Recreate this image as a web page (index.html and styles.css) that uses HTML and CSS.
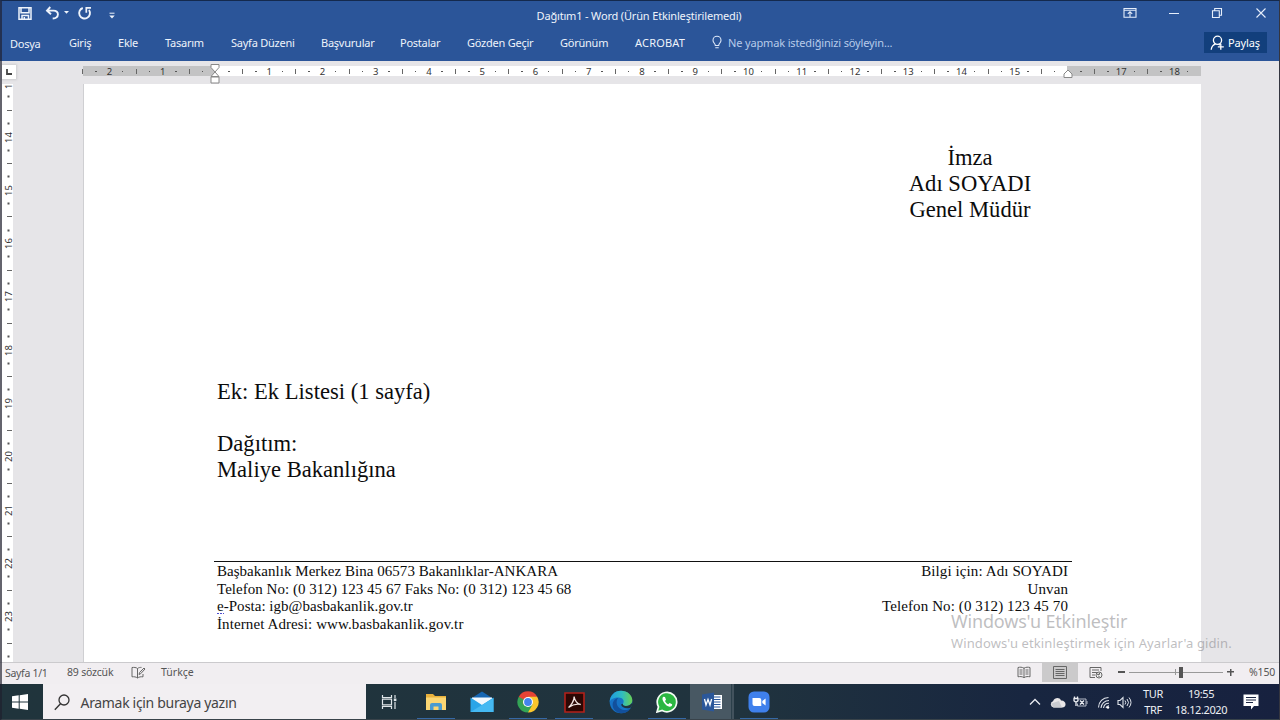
FILE: index.html
```html
<!DOCTYPE html>
<html lang="tr">
<head>
    <meta charset="UTF-8">
    <title>Dağıtım1 - Word</title>
    <link rel="stylesheet" href="styles.css">
</head>
<body>
    <div class="window">
        <!-- Başlık çubuğu -->
        <header class="titlebar">
            <div class="quick">
                <svg width="16" height="16" viewBox="0 0 16 16"><path d="M2 1.700h12v11.600H2zM4 2v4.800h8V2M5 13V9.600h6.500V13M7.300 11v2" fill="none" stroke="#eef3fb" stroke-width="1.500"/></svg>
                <svg class="undo" width="26" height="16" viewBox="0 0 26 16"><path d="M6.300 1 3 4.600l4 3.600M3.300 4.600H9.500c6 0 6 7.600-.8 7.900" fill="none" stroke="#eef3fb" stroke-width="1.900"/><path d="M20 5h5l-2.500 2.800z" fill="#eef3fb"/></svg>
                <svg class="redo" width="16" height="16" viewBox="0 0 16 16"><path d="M5.800 2a5.400 5.400 0 1 0 6.200 2" fill="none" stroke="#eef3fb" stroke-width="1.900"/><path d="M9.300 6.800V1.900h4.700" fill="none" stroke="#eef3fb" stroke-width="1.700"/></svg>
                <svg class="more" width="8" height="8" viewBox="0 0 8 8"><path d="M1.500 1.200h5" stroke="#eef3fb"/><path d="M1.300 3.600h5.400L4 6.500z" fill="#eef3fb"/></svg>
            </div>
            <div class="title">Dağıtım1 - Word (Ürün Etkinleştirilemedi)</div>
            <div class="controls">
                <svg width="14" height="12" viewBox="0 0 14 12"><path d="M1 1.500h12v8.800H1zM1 3.300h12M7 10V5M4.800 6.800 7 4.700l2.200 2.100" fill="none" stroke="#e6eefb" stroke-width="1.100"/></svg>
                <svg width="14" height="12" viewBox="0 0 14 12"><path d="M2 6.500h10" stroke="#e6eefb"/></svg>
                <svg width="14" height="12" viewBox="0 0 14 12"><path d="M2.500 3.700h6.800v6.800H2.500zM4.700 3.500v-2h6.800v6.800h-2" fill="none" stroke="#e6eefb" stroke-width="1.100"/></svg>
                <svg width="14" height="12" viewBox="0 0 14 12"><path d="m2.500 1.500 9 9m0-9-9 9" stroke="#e6eefb" stroke-width="1.100"/></svg>
            </div>
        </header>

        <!-- Şerit sekmeleri -->
        <nav class="tabs">
            <span class="file">Dosya</span>
            <span>Giriş</span>
            <span>Ekle</span>
            <span>Tasarım</span>
            <span>Sayfa Düzeni</span>
            <span>Başvurular</span>
            <span>Postalar</span>
            <span>Gözden Geçir</span>
            <span>Görünüm</span>
            <span class="acrobat">ACROBAT</span>
            <svg width="10" height="15" viewBox="0 0 10 15"><path d="M3.300 10.500c0-2-2.300-2.600-2.300-5.300a4 4 0 0 1 8 0c0 2.700-2.300 3.300-2.300 5.300zM3.300 12.800h3.400" fill="none" stroke="#dce7f8" stroke-width="1.100"/></svg>
            <span class="tell">Ne yapmak istediğinizi söyleyin...</span>
            <button class="share">
                <svg width="15" height="16" viewBox="0 0 15 16"><circle cx="7.500" cy="5.300" r="4.100"/><path d="M1.200 14.800c.3-3 1.800-4.900 4.200-5.600M8.500 9.300l1.500.8M10.800 8.800v6M7.800 11.800h6"/></svg>
                Paylaş
            </button>
        </nav>

        <!-- Yatay cetvel -->
        <div class="ruler-row">
            <div class="tab-stop"><svg width="7" height="6" viewBox="0 0 7 6"><path d="M1 0v5h5" fill="none" stroke="#444" stroke-width="1.800"/></svg></div>
            <div class="hruler" id="hruler"></div>
            <svg class="indent left" width="10" height="20" viewBox="0 0 10 20"><path d="M1 .5h8v3L5 8 1 3.500zM5 8l4 4.500H1zM1 13h8v6H1z" fill="#fff" stroke="#888"/></svg>
            <svg class="indent right" width="10" height="9" viewBox="0 0 10 9"><path d="M5 1l4 4v3.500H1V5z" fill="#fff" stroke="#888"/></svg>
        </div>

        <!-- Belge alanı -->
        <main class="workspace">
            <div class="vruler" id="vruler"></div>
            <article class="page">
                <div class="signature">
                    <p>İmza</p>
                    <p>Adı SOYADI</p>
                    <p>Genel Müdür</p>
                </div>
                <div class="body-text">
                    <p class="ek">Ek: Ek Listesi (1 sayfa)</p>
                    <p>&nbsp;</p>
                    <p>Dağıtım:</p>
                    <p>Maliye Bakanlığına</p>
                </div>
                <footer class="letter-footer">
                    <div>
                        <p>Başbakanlık Merkez Bina 06573 Bakanlıklar-ANKARA</p>
                        <p>Telefon No: (0 312) 123 45 67 Faks No: (0 312) 123 45 68</p>
                        <p><span class="spell">e</span>-Posta: igb@basbakanlik.gov.tr</p>
                        <p class="web">İnternet Adresi: www.basbakanlik.gov.tr</p>
                    </div>
                    <div class="contact">
                        <p>Bilgi için: Adı SOYADI</p>
                        <p>Unvan</p>
                        <p>Telefon No: (0 312) 123 45 70</p>
                    </div>
                </footer>
            </article>
            <div class="watermark">
                <div class="wm-title">Windows'u Etkinleştir</div>
                <div class="wm-sub">Windows'u etkinleştirmek için Ayarlar'a gidin.</div>
            </div>
        </main>

        <!-- Durum çubuğu -->
        <div class="status">
            <span class="st-page">Sayfa 1/1</span>
            <span class="st-words">89 sözcük</span>
            <svg class="proof" width="15" height="13" viewBox="0 0 15 13"><path d="M6.500 2.500C5 1.300 3 1.300 1 1.500v9.300c2-.2 4 0 5.500 1.200zm0 0C8 1.400 9 1.400 10.500 1.400M6.500 12c1.500-1.200 3.500-1.400 5.500-1.200V8M8 8.500l.6-2L13 2l1 1-4.300 4.700z" fill="none" stroke="#666"/></svg>
            <span class="st-lang">Türkçe</span>
            <div class="views">
                <span><svg width="14" height="13" viewBox="0 0 14 13"><path d="M7 2.200C5 1 3 1 1 1.500v9.300c2-.4 4-.4 6 .8 2-1.200 4-1.200 6-.8V1.500c-2-.5-4-.5-6 .7zM7 2v9.500M2.500 4h3M2.500 6h3M2.500 8h3M8.500 4h3M8.500 6h3M8.500 8h3" fill="none" stroke="#666"/></svg></span>
                <span class="on"><svg width="14" height="13" viewBox="0 0 14 13"><path d="M.5.500h13v12H.5zM2.500 3.500h9M2.500 5.500h9M2.500 7.500h9M2.500 9.500h9" fill="none" stroke="#666"/></svg></span>
                <span><svg width="14" height="13" viewBox="0 0 14 13"><path d="M6 11.500H1v-10h11V5M3 4h7M3 6.500h5M3 9h3" fill="none" stroke="#666"/><circle cx="10" cy="9" r="3" fill="#eee" stroke="#666"/><path d="M8 8l2 1 .5-2M9.500 11l1-1" stroke="#555" fill="none"/></svg></span>
            </div>
            <div class="zoom">
                <i class="minus"></i>
                <div class="track"><i class="mid"></i><i class="thumb"></i></div>
                <i class="plus"></i>
            </div>
            <span class="st-zoom">%150</span>
        </div>

        <!-- Görev çubuğu -->
        <div class="taskbar">
            <div class="start"><svg width="16" height="16" viewBox="0 0 16 16"><path d="M0 2.300l6.700-1v6.200H0zM7.700 1.200L16 0v7.500H7.700zM0 8.500h6.700v6.200L0 13.700zM7.700 8.500H16V16l-8.300-1.200z" fill="#fff"/></svg></div>
            <div class="search">
                <svg width="16" height="17" viewBox="0 0 16 17"><circle cx="10" cy="6" r="5" fill="none" stroke="#333" stroke-width="1.300"/><path d="M6.500 9.700.8 15.700" stroke="#333" stroke-width="1.400"/></svg>
                <span>Aramak için buraya yazın</span>
            </div>
            <div class="apps">
                <div class="app"><svg width="17" height="16" viewBox="0 0 17 16"><path d="M1.500 1v2.500h9V1M1.500 15v-2.500h9V15M1.500 5.200h9v5.600h-9zM14 1v3M14 8v7" fill="none" stroke="#dfe5e8" stroke-width="1.200"/><path d="M12.800 4.500h2.600v2.600h-2.600z" fill="#dfe5e8"/></svg></div>
                <div class="app run"><svg width="22" height="20" viewBox="0 0 22 20"><path d="M1 2h7l2 2h11v14H1z" fill="#e9b13c"/><path d="M1 5.500h20V18H1z" fill="#fbd673"/><path d="M5 18v-5q0-2 2-2h8q2 0 2 2v5h-3.500v-3.500h-5V18z" fill="#4a9bd0"/></svg></div>
                <div class="app"><svg width="24" height="22" viewBox="0 0 24 22"><path d="M1 7.500 12 .5l11 7V12H1z" fill="#1666b2"/><path d="M2 6.500h20v8H2z" fill="#f2f8fd"/><path d="M.5 6.500 12 14l11.500-7.500V21H.5z" fill="#2aa5e8"/><path d="M.5 21 23.500 7v14z" fill="#45b9f2"/></svg></div>
                <div class="app run"><svg width="22" height="22" viewBox="0 0 22 22"><path d="M11 11 1.800 5.700A10.600 10.600 0 0 1 20.200 5.700z" fill="#e54335"/><path d="M11 11V5.700h9.200A10.600 10.600 0 0 1 11 21.600z" fill="#fbc62d"/><path d="M1.800 5.700A10.600 10.600 0 0 0 11 21.600l4.600-8z" fill="#33a456"/><path d="M1.800 5.700 11 5.700v5L6.400 13.600z" fill="#e54335"/><path d="M1.800 5.700 6.400 13.600 11 11z" fill="#33a456"/><circle cx="11" cy="11" r="5" fill="#fff"/><circle cx="11" cy="11" r="3.900" fill="#4484ee"/></svg></div>
                <div class="app run"><svg width="21" height="21" viewBox="0 0 21 21"><path d="M1 1h19v19H1z" fill="#2c0805" stroke="#b3211a" stroke-width="1.600"/><path d="M4.500 15.500c2-1.200 6.200-7.500 5.600-11 .3 3.500 3.500 8 6.600 8-3.500-1-8.500.3-12.200 3z" fill="none" stroke="#f5e7e4" stroke-width="1.300"/></svg></div>
                <div class="app"><svg width="24" height="24" viewBox="0 0 24 24">
                    <defs><linearGradient id="sea" x1="0" y1="0" x2="1" y2="0"><stop offset="0" stop-color="#1e9be0"/><stop offset=".55" stop-color="#30bcc0"/><stop offset="1" stop-color="#69d053"/></linearGradient></defs>
                    <circle cx="12" cy="12" r="11.300" fill="#1673c6"/>
                    <path d="M.7 12C.9 5.500 5.800.7 12 .7S23.300 5 23.300 10c0 4-3 6-6.500 6-2.200 0-3.500-1-2.800-2.200 2-3.300-.6-6.300-4.500-6.300C5 7.500 1.500 9 .7 12z" fill="url(#sea)"/>
                    <path d="M9 8c-3.500 5 0 11 6 12 3 .4 5-.7 6.300-1.800C18 24 10 25 5.500 20 1.800 15.500 4 9 9 8z" fill="#12509c"/>
                    <path d="M14 13.800c-.7 1.200.6 2.200 2.800 2.200 2.500 0 4.800-1 5.900-3 .8 1.500.3 3.500-1.200 4.700-4 1.500-8.500.3-9.500-3.200z" fill="#20333d"/>
                </svg></div>
                <div class="app run"><svg width="22" height="22" viewBox="0 0 22 22"><path d="M1 21l1.500-5.200A9.700 9.700 0 1 1 6.200 19.500z" fill="#2bb741" stroke="#f3fbf4" stroke-width="1.700"/><path d="M7.300 5.800c-3 2.200 2.500 9.800 6.300 10 1.800 0 2.700-1.400 2.500-2.600l-2.500-1.200-1.300 1.300c-1.500-.6-2.600-1.700-3.300-3.300l1-1.300-1-2.600z" fill="#fff"/></svg></div>
                <div class="app active"><svg width="21" height="20" viewBox="0 0 21 20"><path d="M11 3h9v14h-9z" fill="#fff"/><path d="M12 5h6.500M12 7.500h6.500M12 10h6.500M12 12.500h6.500M12 15h6.500" stroke="#2b579a"/><path d="M0 2.500 12 .5v19L0 17.500z" fill="#2b579a"/><path d="m2.500 7 1.500 6 2-5.500 2 5.500 1.600-6" fill="none" stroke="#fff" stroke-width="1.300"/></svg></div>
                <div class="app run"><svg width="22" height="22" viewBox="0 0 22 22"><rect x=".5" y=".5" width="21" height="21" rx="5.500" fill="#3f80ec"/><path d="M4.500 7h6.800q2 0 2 2v6H6.500q-2 0-2-2zM14.300 10l3.300-2.600v7.200l-3.300-2.500z" fill="#fff"/></svg></div>
            </div>
            <div class="tray">
                <svg width="12" height="8" viewBox="0 0 12 8"><path d="M1 6.500 6 1.500l5 5" fill="none" stroke="#e8ebf0" stroke-width="1.300"/></svg>
                <svg class="cloud" width="16" height="11" viewBox="0 0 16 11"><path d="M3.500 10.500A3.200 3.200 0 0 1 3 4.300C4.500.5 9.500-.2 11 3.500c3-.2 4.800 2 4.500 4.200-.2 1.800-1.500 2.800-3 2.800z" fill="#e9e7e8"/><path d="M1 6.500 9 4l3 6.500H3.500z" fill="#c9cbd0"/></svg>
                <svg class="battery" width="15" height="12" viewBox="0 0 15 12"><path d="M6 3h7v7H4.500V7.500M14 5v3" fill="none" stroke="#b6bcc8"/><path d="M1 2.500h4v2.200q-2 2.300-4 0zM1.500 2.500V.500M4.500 2.500V.500M3 6v4M7 4.500l4 4m0-4-4 4" fill="none" stroke="#eef0f4" stroke-width="1.300"/></svg>
                <svg class="wifi" width="13" height="13" viewBox="0 0 13 13"><path d="M1.500 11.500a10 10 0 0 1 10-10M4 12a8 8 0 0 1 8-7.500M6.500 12A5.500 5.500 0 0 1 12 7.300M9 12a3 3 0 0 1 3-2.200" fill="none" stroke="#dfe3ea" stroke-width="1.100"/><circle cx="11" cy="11.500" r="1.200" fill="#fff"/></svg>
                <svg class="sound" width="15" height="13" viewBox="0 0 15 13"><path d="M1 4.500h2L6 1.500v10L3 8.500H1z" fill="none" stroke="#dfe3ea" stroke-width="1.100"/><path d="M8 4.500q1.500 2 0 4M10 3q3 3.500 0 7M12 1.500q4 5 0 10" fill="none" stroke="#dfe3ea"/></svg>
                <div class="lang"><div>TUR</div><div>TRF</div></div>
                <div class="clock"><div>19:55</div><div>18.12.2020</div></div>
                <svg class="note" width="16" height="17" viewBox="0 0 16 17"><path d="M.5.500h15v11.500H11L8 15.500V12H.5z" fill="#fff"/><path d="M3 3.500h10M3 6h10M3 8.500h7" stroke="#1a2541"/></svg>
            </div>
        </div>
    </div>
    <script src="ruler.js"></script>
</body>
</html>
```
FILE: styles.css
```css
* {
    box-sizing: border-box;
}

body {
    margin: 0;
    width: 1280px;
    height: 720px;
    overflow: hidden;
    font-family: "Noto Sans", "Open Sans", sans-serif;
    font-size: 11px;
}

p {
    margin: 0;
    white-space: pre;
}

svg {
    display: block;
    flex: none;
}

.window {
    position: relative;
    display: flex;
    flex-direction: column;
    width: 1280px;
    height: 720px;
    background: #e6e5e8;
}

/* pencere kenarları */
.window::after {
    content: "";
    position: absolute;
    inset: 0;
    border-top: 1px solid #14294d;
    border-left: 2px solid rgba(30, 30, 45, 0.65);
    border-right: 1px solid #34353f;
    border-bottom: 1px solid #39434a;
}

/* Başlık */
.titlebar {
    display: grid;
    grid-template-columns: 300px 1fr 300px;
    align-items: center;
    height: 28px;
    background: #2b5599;
    color: #eef3fb;
}

.quick {
    display: flex;
    align-items: center;
    padding-left: 17px;
}

.undo {
    margin-left: 11px;
}

.redo {
    margin-left: 7px;
}

.more {
    margin: 3px 0 0 15px;
}

.title {
    padding: 2px 2px 0 0;
    text-align: center;
    white-space: nowrap;
    letter-spacing: -0.17px;
}

.controls {
    display: flex;
    justify-content: flex-end;
    gap: 29.5px;
    padding: 0 12.5px 2px 0;
}

/* Sekmeler */
.tabs {
    display: grid;
    grid-template-columns: 59px 49px 47px 66px 90px 79px 67px 93px 75px 77px 16px 1fr 63px;
    align-items: center;
    height: 33px;
    padding: 0 13px 4px 10px;
    background: #2b5599;
    color: #eef3fb;
    white-space: nowrap;
    letter-spacing: -0.24px;
}

.tabs > span {
    margin-top: -1px;
}

.tabs > .file {
    margin-top: 1px;
}

.tabs > .acrobat {
    letter-spacing: 0.2px;
}

.tabs > .tell {
    color: #b7cbe9;
    letter-spacing: -0.15px;
}

.share {
    display: flex;
    align-items: center;
    gap: 3px;
    height: 21px;
    padding: 0 6px;
    border: 0;
    background: #123f7c;
    color: #fff;
    font: inherit;
    letter-spacing: -0.15px;
}

.share svg {
    fill: none;
    stroke: #fff;
    stroke-width: 1.3;
}

/* Cetveller */
.ruler-row {
    position: relative;
    display: flex;
    height: 23px;
    padding-top: 5px;
}

.tab-stop {
    display: flex;
    align-items: center;
    justify-content: center;
    width: 14px;
    height: 14px;
    margin: -1px 67px 0 2px;
    background: #fff;
    box-shadow: 0 0 2px 1px #cdcdd0;
}

.hruler {
    display: flex;
    width: 1118px;
    height: 10px;
    background: linear-gradient(90deg, #c3c3c4 132px, #fff 132px 984px, #c3c3c4 984px);
}

.vruler {
    width: 11px;
    margin-left: 2px;
    overflow: hidden;
    background: #fff;
}

.slot {
    flex: none;
    display: flex;
    align-items: center;
    justify-content: center;
    color: #333;
    font-size: 9.5px;
    line-height: 14px;
}

.hruler .slot {
    width: 13.325px;
    height: 11px;
}

.hruler .slot:first-child {
    margin-left: -6.9px;
}

.vruler .slot {
    width: 14px;
    height: 13.33px;
}

.vruler .slot:first-child {
    margin-top: -7px;
}

.vruler .slot span {
    writing-mode: vertical-rl;
    transform: rotate(180deg);
}

.dot {
    width: 1.5px;
    height: 1.5px;
    background: #555;
}

.bar {
    width: 1px;
    height: 5px;
    background: #666;
}

.vruler .bar {
    width: 5px;
    height: 1px;
}

.indent {
    position: absolute;
}

.indent.left {
    left: 210px;
    top: 3px;
}

.indent.right {
    left: 1063px;
    top: 8px;
}

/* Belge */
.workspace {
    position: relative;
    display: flex;
    height: 578px;
}

.page {
    width: 1118px;
    margin-left: 70px;
    padding-top: 61px;
    border-left: 1px solid #cfcfd2;
    background: #fff;
    color: #0c0c0c;
    font-family: "Liberation Serif", serif;
    font-size: 22.6px;
    line-height: 26px;
}

.signature {
    width: 200px;
    margin-left: 786px;
    text-align: center;
}

.body-text {
    margin: 156px 0 0 133px;
}

.letter-footer {
    display: flex;
    justify-content: space-between;
    width: 858px;
    margin: 78px 0 0 130px;
    padding: 1px 4px 0 3px;
    border-top: 1px solid #111;
    font-size: 15px;
    line-height: 17.5px;
    letter-spacing: 0.03px;
}

.web {
    letter-spacing: 0.1px;
}

.contact {
    text-align: right;
    letter-spacing: 0.1px;
}

.spell {
    background: linear-gradient(90deg, #4b4bd0 60%, transparent 60%) 0 100% / 3px 1px repeat-x;
}

.watermark {
    position: absolute;
    left: 951px;
    top: 526px;
    color: rgba(125, 125, 130, 0.5);
    white-space: nowrap;
}

.wm-title {
    font-size: 18px;
    line-height: 23px;
    letter-spacing: -0.18px;
}

.wm-sub {
    font-size: 13px;
    line-height: 20px;
    letter-spacing: 0.11px;
}

/* Durum çubuğu */
.status {
    display: flex;
    align-items: center;
    height: 22px;
    padding: 0 5px 3px;
    border-top: 1px solid #cbcacd;
    background: #f1eef1;
    color: #555;
    font-size: 10.5px;
    white-space: nowrap;
}

.st-page {
    width: 62px;
    padding-top: 1px;
    letter-spacing: -0.3px;
}

.st-words {
    width: 64px;
    letter-spacing: -0.2px;
}

.proof {
    margin-right: 15px;
}

.views {
    display: flex;
    margin-left: auto;
}

.views span {
    display: flex;
    align-items: center;
    justify-content: center;
    width: 36px;
    height: 20px;
}

.views .on {
    background: #cbcacb;
}

.zoom {
    display: flex;
    align-items: center;
    gap: 4px;
    margin: 0 15px 0 4px;
}

.minus,
.plus {
    width: 7px;
    height: 2px;
    background: #555;
}

.plus {
    height: 7px;
    background: linear-gradient(#555, #555) center / 7px 1.5px no-repeat, linear-gradient(#555, #555) center / 1.5px 7px no-repeat;
}

.track {
    display: flex;
    align-items: center;
    width: 94px;
    height: 12px;
    background: linear-gradient(#999, #999) center / 100% 1px no-repeat;
}

.mid {
    width: 1px;
    height: 6px;
    margin-left: 46px;
    background: #999;
}

.thumb {
    width: 4px;
    height: 11px;
    margin-left: 3px;
    background: #555;
}

.st-zoom {
    width: 26px;
    letter-spacing: -0.15px;
}

/* Görev çubuğu */
.taskbar {
    display: flex;
    height: 36px;
    background: linear-gradient(90deg, #20343c 0, #20333e 58%, #182640 80%, #17213f);
    color: #eceff3;
}

.start {
    display: flex;
    align-items: center;
    justify-content: center;
    width: 43px;
    padding-right: 3px;
}

.search {
    display: flex;
    align-items: center;
    gap: 10.5px;
    width: 323px;
    padding-left: 11px;
    background: #f2eff2;
    color: #444;
    font-size: 14px;
    letter-spacing: -0.32px;
}

.apps {
    display: flex;
    margin-left: 0.5px;
}

.app {
    display: flex;
    align-items: center;
    justify-content: center;
    width: 46.2px;
}

.run {
    background: linear-gradient(#3568a5, #3568a5) 50% 34px / 38px 1px no-repeat;
}

.active {
    background: linear-gradient(90deg, #485863 41px, #2b3f4a 41px 42px, #42525d 42px 44px, transparent 44px);
}

.tray {
    display: flex;
    align-items: center;
    margin-left: auto;
    padding-right: 21px;
}

.cloud {
    margin-left: 9px;
}

.battery {
    margin-left: 7px;
}

.wifi {
    margin-left: 9px;
}

.sound {
    margin-left: 7px;
}

.lang,
.clock {
    line-height: 16px;
    text-align: center;
    letter-spacing: -0.4px;
}

.lang {
    margin-left: 11px;
    width: 20px;
}

.clock {
    width: 54px;
    margin-left: 11px;
    white-space: nowrap;
}

.clock div {
    margin: 0 -2px;
}

.note {
    margin-left: 15px;
}
```
FILE: ruler.js
```js
// q: çeyrek santim cinsinden konum
function drawRuler(id, from, to, skip) {
    const ruler = document.getElementById(id);
    for (let q = from; q <= to; q++) {
        const slot = document.createElement('div');
        slot.className = 'slot';
        if (!skip.includes(q)) {
            const mark = document.createElement('span');
            if (q % 4 === 0) {
                mark.textContent = Math.abs(q / 4);
            } else {
                mark.className = q % 2 === 0 ? 'bar' : 'dot';
            }
            slot.appendChild(mark);
        }
        ruler.appendChild(slot);
    }
}

drawRuler('hruler', -10, 73, [0, 64]);
drawRuler('vruler', 52, 95, []);
```
